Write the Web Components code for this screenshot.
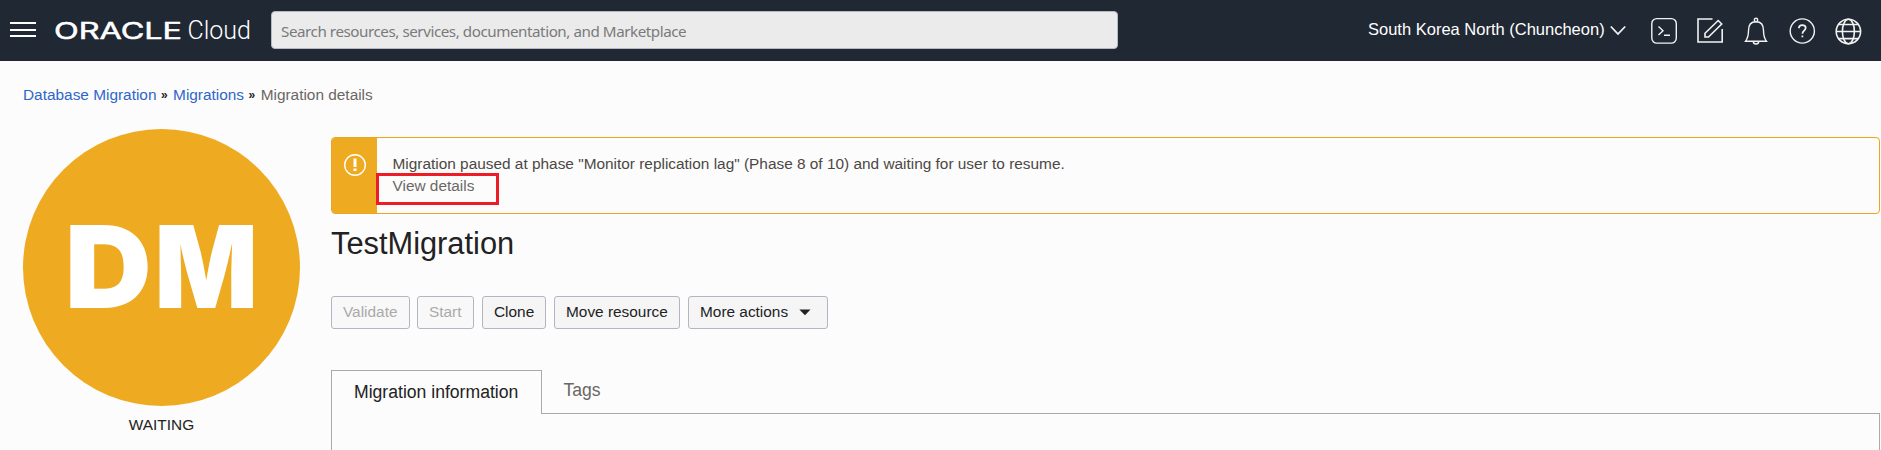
<!DOCTYPE html>
<html lang="en">
<head>
<meta charset="utf-8">
<title>Migration details</title>
<style>
html,body{margin:0;height:100%;overflow:hidden}
body{background:#fcfcfc;font:15.4px/22px "Liberation Sans",Arial,sans-serif;color:#222}
</style>
</head>
<body>
<console-page>
  <console-header slot="header"></console-header>
  <bread-crumbs slot="crumbs"></bread-crumbs>
  <status-badge slot="badge">WAITING</status-badge>
  <alert-banner>Migration paused at phase "Monitor replication lag" (Phase 8 of 10) and waiting for user to resume.<span slot="link">View details</span></alert-banner>
  <page-title>TestMigration</page-title>
  <action-bar>
    <action-button disabled style="width:79px;margin-right:7px">Validate</action-button>
    <action-button disabled style="width:57px;margin-right:8px">Start</action-button>
    <action-button style="width:64px;margin-right:8px">Clone</action-button>
    <action-button style="width:126px;margin-right:8px">Move resource</action-button>
    <action-button menu style="width:140px">More actions</action-button>
  </action-bar>
  <tab-set></tab-set>
</console-page>
<script>
const define = (name, html) => customElements.define(name, class extends HTMLElement {
  constructor() {
    super();
    const t = document.createElement('template');
    t.innerHTML = html;
    this.attachShadow({mode: 'open'}).append(t.content.cloneNode(true));
  }
});

define('console-page', `
<style>
:host{display:block;width:1881px;height:450px;overflow:hidden}
.body{display:grid;grid-template-columns:277px 1549px;column-gap:31px;padding-left:23px}
main{padding-top:8px;display:flex;flex-direction:column}
</style>
<slot name="header"></slot>
<slot name="crumbs"></slot>
<div class="body"><slot name="badge"></slot><main><slot></slot></main></div>`);

define('console-header', `
<style>
:host{display:flex;align-items:center;height:61px;box-sizing:border-box;background:#202833;color:#fff}
.menu{display:flex;flex-direction:column;justify-content:space-between;height:15px;width:26px;margin:-2px 19px 0 10px}
.menu i{height:2px;background:#fff}
.logo{display:block;width:197px;height:61px}
.search{box-sizing:border-box;width:847px;height:38px;margin:-1px 0 0 19px;border:1px solid #b4b9c4;border-radius:4px;background:#ebebeb;color:#7a7a7a;font:15.2px/39px "Noto Sans","Open Sans",sans-serif;padding-left:9px;white-space:nowrap}
.search span{letter-spacing:-.45px}
.region{margin-left:250px;font-size:16.5px;width:242px;white-space:nowrap;margin-top:-3px}
.icons{display:flex;gap:18px;margin-left:24px}
svg{fill:none;stroke:#f2f2f2;stroke-width:1.4;display:block}
.logo text{fill:#fff;stroke:none}
.logo .brand{stroke:#fff;stroke-width:.5}
</style>
<div class="menu"><i></i><i></i><i></i></div>
<svg class="logo" viewBox="0 0 197 61">
<text class="brand" x="-1" y="38.700" font-family="Inter" font-weight="400" font-size="22.300" textLength="128" lengthAdjust="spacingAndGlyphs">ORACLE</text>
<text x="132.500" y="39.300" font-family="Roboto" font-weight="300" font-size="25" textLength="63.500" lengthAdjust="spacingAndGlyphs">Cloud</text></svg>
<div class="search"><span>Search resources, services, documentation, and Marketplace</span></div>
<div class="region">South Korea North (Chuncheon)</div>
<svg width="16" height="12" viewBox="0 0 16 12" style="stroke-width:1.800"><path d="M.8 1.500 8 9 15.200 1.500"/></svg>
<div class="icons">
<svg width="28" height="28"><rect x="1.800" y="1.600" width="24.500" height="24.500" rx="5"/><path d="M8.500 9.500 13 13.700 8.500 18M14 18.200h6"/></svg>
<svg width="28" height="28" style="stroke-width:1.600"><path d="M16.500 2H2V25H26.200V12"/><path d="M9 20V16.300L22.200 3.500 25.700 7 12.500 20z"/></svg>
<svg width="28" height="28"><circle cx="14" cy="3" r="1.700"/><path d="M3.500 24.300C6 21 6.500 18 6.500 13.500 6.500 8 9 4.800 14 4.800S21.500 8 21.500 13.500C21.500 18 22 21 24.500 24.300z"/><path d="M11.300 24.500a2.700 2.500 0 0 0 5.400 0"/></svg>
<svg width="28" height="28"><circle cx="14.300" cy="14" r="12.100"/><path stroke-width="1.700" d="M10.900 11.300C10.900 9.300 12.200 8.200 14.300 8.200S17.700 9.400 17.700 11.100C17.700 13.500 14.400 13.600 14.400 16.800M14.400 18.400V20.200"/></svg>
<svg width="28" height="28" style="stroke-width:1.600"><circle cx="14.400" cy="14.500" r="12.200"/><ellipse cx="14.400" cy="14.500" rx="6" ry="12.200"/><path d="M2 14.500H27M4.500 7.500H24.300M4.500 21.600H24.300"/></svg>
</div>`);

define('bread-crumbs', `
<style>
:host{display:flex;height:68px;padding:23px 0 0 23px;box-sizing:border-box;color:#6b6764;white-space:pre}
a{color:#2f66c9}
b{font-size:12px;color:#222;width:16.600px;box-sizing:border-box;padding-left:4.500px;font-weight:700}
</style>
<a>Database Migration</a><b>»</b><a>Migrations</a><b>»</b><span>Migration details</span>`);

define('status-badge', `
<style>
:host{display:block;text-align:center}
svg{display:block;width:277px;height:277px;margin-bottom:8px}
</style>
<svg viewBox="0 0 277 277"><circle cx="138.500" cy="138.500" r="138.500" fill="#eeaa20"/>
<text y="179" fill="#fff" font-family="Inter" font-weight="900" font-size="114"><tspan x="41.700" textLength="87" lengthAdjust="spacingAndGlyphs">D</tspan><tspan x="131.500" textLength="103.500" lengthAdjust="spacingAndGlyphs">M</tspan></text></svg>
<slot></slot>`);

define('alert-banner', `
<style>
:host{display:flex;height:77px;box-sizing:border-box;border:1px solid #eaa61f;border-radius:4px;overflow:hidden;color:#4c4845}
.icon{width:45px;background:#eeaa20;padding:15px 0 0 12px;box-sizing:border-box}
.text{padding:15px 0 0 15.500px;position:relative}
.link{color:#6b6764}
.mark{position:absolute;left:-1px;top:35px;width:117px;height:26px;border:3px solid #ee1c25}
</style>
<div class="icon"><svg width="24" height="24" fill="none" stroke="#fff"><circle cx="11" cy="12" r="10.300" stroke-width="1.400"/><path stroke-width="3" d="M11 5.500V14M11 15.500V18"/></svg></div>
<div class="text"><div><slot></slot></div><div class="link"><slot name="link"></slot></div><div class="mark"></div></div>`);

define('page-title', `
<style>:host{display:block;font-size:30.800px;line-height:36px;margin-top:12px;height:70px}</style><slot></slot>`);

define('action-bar', `<style>:host{display:flex;height:74px}</style><slot></slot>`);

define('action-button', `
<style>
:host{display:flex;align-items:center;box-sizing:border-box;height:33px;border:1px solid #b3b6c2;border-radius:3px;background:#f5f5f5;padding:0 0 2px 11px;white-space:nowrap}
:host([disabled]){color:#aaa;background:#f8f8f8}
svg{display:none;margin:1px 0 0 11px}
:host([menu]) svg{display:block}
</style><slot></slot><svg width="12" height="7"><path fill="#222" d="M.3 .5H11.500L6 6.200z"/></svg>`);

define('tab-set', `
<style>
:host{display:block}
.tabs{display:flex;font-size:17.600px;height:44px}
.on{box-sizing:border-box;width:211px;border:1px solid #aaa;border-bottom:0;padding:10px 0 0 22px}
.off{flex:1;border-bottom:1px solid #aaa;padding:9px 0 0 21.500px;color:#6b6764;box-sizing:border-box}
.panel{height:60px;border:1px solid #aaa;border-top:0}
</style>
<div class="tabs"><div class="on">Migration information</div><div class="off">Tags</div></div><div class="panel"></div>`);
</script>
</body>
</html>
